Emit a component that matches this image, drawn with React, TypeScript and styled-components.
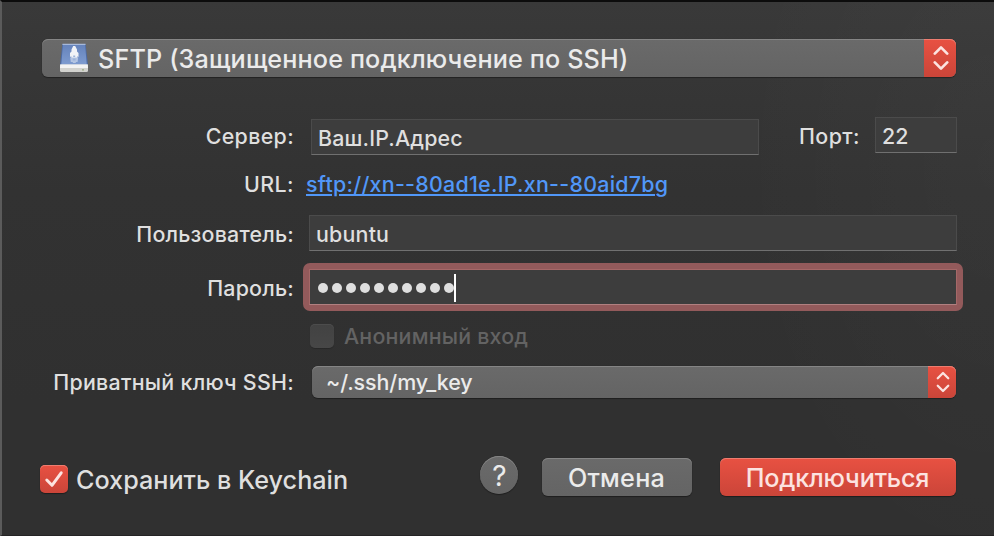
import React from "react";
import styled, { createGlobalStyle, css } from "styled-components";

const GlobalStyle = createGlobalStyle`
  html, body { margin: 0; background: #333; }
  * { box-sizing: border-box; }
`;

const Dialog = styled.main`
  display: flex;
  flex-direction: column;
  width: 994px;
  height: 536px;
  padding: 37px 31px 0 40px;
  overflow: hidden;
  border: solid;
  border-width: 2px 0 1px 2px;
  border-color: #0c0c0c #333 #252425 #5b5b5b;
  background:
    radial-gradient(ellipse 260px 420px at 100% 30%, rgba(255, 255, 255, 0.025), transparent),
    linear-gradient(#393939 0, #353535 100px, #323232 190px, #303030 400px, #303030 100%);
  font-family: Inter, "Liberation Sans", sans-serif;
  font-size: 21.4px;
  font-weight: 450;
  line-height: 26px;
  color: #dfdfdf;
  white-space: nowrap;
`;

const Row = styled.div<{ $height: number; $gap?: number }>`
  display: flex;
  flex: none;
  align-items: center;
  height: ${(p) => p.$height}px;
  margin-top: ${(p) => p.$gap ?? 0}px;
`;

const Text = styled.span<{ $track?: number; $drop?: number; $left?: number; $large?: boolean }>`
  margin-left: ${(p) => p.$left ?? 0}px;
  padding-top: ${(p) => p.$drop ?? 0}px;
  letter-spacing: ${(p) => p.$track ?? 0}px;
  ${(p) =>
    p.$large &&
    css`
      font-size: 25.2px;
      font-weight: 450;
      line-height: 30px;
    `}
`;

const Label = styled(Text)`
  width: 252px;
  margin-right: 1px;
  flex: none;
  text-align: right;
`;

const Link = styled.a<{ $track: number }>`
  margin-left: 11px;
  letter-spacing: ${(p) => p.$track}px;
  color: #5197f8;
  text-decoration: underline;
  text-decoration-thickness: 2px;
  text-underline-offset: 2px;
`;

const Field = styled.div<{ $width: number; $left: number; $align?: string }>`
  display: flex;
  flex: none;
  align-items: center;
  align-self: ${(p) => p.$align ?? "center"};
  width: ${(p) => p.$width}px;
  height: 36px;
  margin-left: ${(p) => p.$left}px;
  padding-left: 6px;
  border: 1px solid #4b4b4b;
  border-bottom-color: #707070;
  background: #3d3d3d;
`;

const FocusRing = styled.div`
  flex: none;
  margin-left: 8px;
  padding: 6px;
  border-radius: 7px;
  background: #935a5b;
`;

const PasswordField = styled(Field)`
  padding: 2px 0 0 8px;
  gap: 4px;
  border-color: #a56868;
  border-bottom-color: #b08080;
`;

const Dot = styled.i`
  width: 10px;
  height: 10px;
  border-radius: 50%;
  background: #dfdfdf;
`;

const Caret = styled.i`
  width: 2px;
  height: 28px;
  margin-left: -4px;
  background: #fff;
`;

const raised = css`
  background: linear-gradient(#6a6a6a, #646464);
  box-shadow: inset 0 1px 0 #858585, 0 1px 1px rgba(0, 0, 0, 0.35), 0 0 1px rgba(0, 0, 0, 0.3);
`;

const accent = css`
  background: linear-gradient(#e85142, #cb4539);
  box-shadow: inset 0 1px 0 #ee7d70, 0 1px 1px rgba(0, 0, 0, 0.35), 0 0 1px rgba(0, 0, 0, 0.3);
`;

const Select = styled.div<{ $width: number; $height: number; $left?: number; $pad: number }>`
  ${raised}
  display: flex;
  align-items: center;
  flex: none;
  width: ${(p) => p.$width}px;
  height: ${(p) => p.$height}px;
  margin-left: ${(p) => p.$left ?? 0}px;
  padding-left: ${(p) => p.$pad}px;
  border-radius: 6px;
  color: #ebebeb;
`;

const Stepper = styled.span<{ $width: number }>`
  display: flex;
  align-items: center;
  justify-content: center;
  align-self: stretch;
  width: ${(p) => p.$width}px;
  margin-left: auto;
  padding-left: 1px;
  border-radius: 0 6px 6px 0;
  background: linear-gradient(#e85142, #cb4539);
  box-shadow: inset 0 1px 0 #ee7d70;
`;

const Checkbox = styled.span<{ $size: number; $checked?: boolean }>`
  display: flex;
  flex: none;
  width: ${(p) => p.$size}px;
  height: ${(p) => p.$size}px;
  border-radius: 5px;
  ${(p) =>
    p.$checked
      ? accent
      : css`
          background: linear-gradient(#424242, #474747);
          box-shadow: inset 0 1px 0 #4c4c4c, 0 1px 1px rgba(0, 0, 0, 0.2);
        `}
`;

const DisabledOption = styled.div`
  display: flex;
  align-items: center;
  gap: 10px;
  margin-left: 268px;
  color: #636363;
`;

const SaveOption = styled.div`
  display: flex;
  align-items: center;
  gap: 8px;
  margin: 6px 0 0 -2px;
`;

const Actions = styled.div`
  display: flex;
  align-items: flex-start;
  align-self: stretch;
  margin-left: auto;
  margin-right: 7px;
`;

const HelpButton = styled.button`
  ${raised}
  width: 38px;
  height: 38px;
  margin-right: 24px;
  padding: 1px 0 0 1px;
  border: 0;
  border-radius: 50%;
  font: 400 28px/38px Inter, sans-serif;
  color: #ebebeb;
`;

const Button = styled.button<{ $width: number; $primary?: boolean }>`
  ${raised}
  ${(p) => p.$primary && accent}
  width: ${(p) => p.$width}px;
  height: 38px;
  margin: 2px 0 0 ${(p) => (p.$primary ? 28 : 0)}px;
  padding: 2px 1px 0 0;
  border: 0;
  border-radius: 6px;
  font-family: inherit;
  color: ${(p) => (p.$primary ? "#fce3e0" : "#ebebeb")};
`;

const DriveIcon = () => (
  <svg width="28" height="30" viewBox="0 0 28 30">
    <defs>
      <linearGradient id="lid" x1="0" y1="0" x2="0" y2="1">
        <stop offset="0" stopColor="#6482bb" />
        <stop offset="1" stopColor="#7f9cd0" />
      </linearGradient>
    </defs>
    <path d="M2.4 1H25.6L28 22H0Z" fill="#4b6aa6" />
    <path d="M3 1H25L26.8 22H1.2Z" fill="url(#lid)" />
    <path d="M2.5 .8H25.5V2H2.4Z" fill="#a7b9da" />
    <path d="M0 21.5H28V27.5Q28 29 26.5 29H1.5Q0 29 0 27.5Z" fill="#d2d2ce" />
    <path d="M.3 21.5H27.7L28 25H0Z" fill="#f3f3f3" />
    <rect x="22" y="26.4" width="2" height="1" fill="#8aa06c" />
    <path d="M13.2 3H15.2L17 6.5V8.5L18.5 10V14L17.3 13.3V15H11.3V13.3L10 14V10L11.5 8.5V6.5Z" fill="#f1f3f7" />
    <path d="M10.2 14.5H18.2L17.6 19H15.8V20H12.8V19H10.8Z" fill="#b4c5e3" />
    <path d="M13.2 12.5H15.2V14H13.2ZM12.8 15.5H15.6V17.5H12.8Z" fill="#9cb3da" />
  </svg>
);

const Chevrons = ({ width, height }: { width: number; height: number }) => (
  <svg width={width} height={height} viewBox="0 0 16 26" fill="none" stroke="#fce3e0" strokeWidth="2.7" strokeLinecap="round" strokeLinejoin="round">
    <path d="M1.8 8.6L8 2.4L14.2 8.6M1.8 17.4L8 23.6L14.2 17.4" />
  </svg>
);

const CheckMark = () => (
  <svg width="28" height="28" viewBox="0 0 28 28" fill="none" stroke="#fce3e0" strokeWidth="3" strokeLinecap="round" strokeLinejoin="round">
    <path d="M6.8 15L12 20.3L21.2 7.8" />
  </svg>
);

export default function App() {
  return (
    <>
      <GlobalStyle />
      <Dialog>
        <Row $height={38}>
          <Select $width={914} $height={38} $pad={18}>
            <DriveIcon />
            <Text $large $track={0.14} $drop={2} $left={10}>SFTP (Защищенное подключение по SSH)</Text>
            <Stepper $width={32}>
              <Chevrons width={16} height={26} />
            </Stepper>
          </Select>
        </Row>

        <Row $height={38} $gap={40}>
          <Label $track={0.34}>Сервер:</Label>
          <Field $width={448} $left={16} $align="flex-end">
            <Text $track={0.16} $drop={2}>Ваш.IP.Адрес</Text>
          </Field>
          <Text $track={0.42} $left={40}>Порт:</Text>
          <Field $width={82} $left={15} $align="flex-start">
            <Text $track={0.2} $drop={2}>22</Text>
          </Field>
        </Row>

        <Row $height={28} $gap={15}>
          <Label $track={0.4}>URL:</Label>
          <Link $track={0.27}>sftp://xn--80ad1e.IP.xn--80aid7bg</Link>
        </Row>

        <Row $height={36} $gap={17}>
          <Label $track={0.2} $drop={2}>Пользователь:</Label>
          <Field $width={648} $left={14}>
            <Text $track={0.2} $drop={2}>ubuntu</Text>
          </Field>
        </Row>

        <Row $height={48} $gap={12}>
          <Label $track={0.2} $drop={2}>Пароль:</Label>
          <FocusRing>
            <PasswordField $width={648} $left={0}>
              {Array.from({ length: 10 }, (_, i) => (
                <Dot key={i} />
              ))}
              <Caret />
            </PasswordField>
          </FocusRing>
        </Row>

        <Row $height={24} $gap={13}>
          <DisabledOption>
            <Checkbox $size={24} />
            <Text $track={0.2}>Анонимный вход</Text>
          </DisabledOption>
        </Row>

        <Row $height={32} $gap={18}>
          <Label $track={0.27}>Приватный ключ SSH:</Label>
          <Select $width={644} $height={32} $left={17} $pad={14}>
            <Text $track={-0.07}>~/.ssh/my_key</Text>
            <Stepper $width={28}>
              <Chevrons width={14} height={22} />
            </Stepper>
          </Select>
        </Row>

        <Row $height={40} $gap={58}>
          <SaveOption>
            <Checkbox $size={28} $checked>
              <CheckMark />
            </Checkbox>
            <Text $large $track={-0.01} $drop={2}>Сохранить в Keychain</Text>
          </SaveOption>
          <Actions>
            <HelpButton>?</HelpButton>
            <Button $width={150}>
              <Text $large $track={0.25}>Отмена</Text>
            </Button>
            <Button $width={236} $primary>
              <Text $large $track={-0.18}>Подключиться</Text>
            </Button>
          </Actions>
        </Row>
      </Dialog>
    </>
  );
}
